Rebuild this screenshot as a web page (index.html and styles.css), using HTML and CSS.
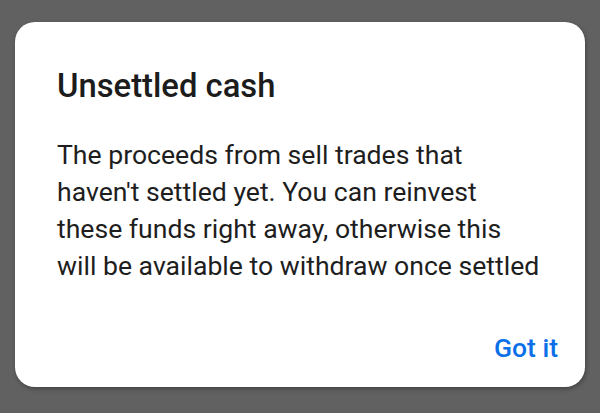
FILE: index.html
```html
<!DOCTYPE html>
<html>
<head>
<meta charset="utf-8">
<link rel="stylesheet" href="styles.css">
</head>
<body>
<div class="dialog">
  <h1 class="title">Unsettled cash</h1>
  <p class="body">The proceeds from sell trades that<br>haven't settled yet. You can reinvest<br>these funds right away, otherwise this<br>will be available to withdraw once settled</p>
  <div class="actions"><button class="btn">Got it</button></div>
</div>
</body>
</html>
```
FILE: styles.css
```css
html, body { margin: 0; padding: 0; }
body {
  width: 600px;
  height: 413px;
  background: #616161;
  font-family: Roboto, "Noto Sans", sans-serif;
  padding: 22px 15px 0 15px;
  box-sizing: border-box;
}
.dialog {
  background: #fff;
  border-radius: 20px;
  height: 365px;
  box-sizing: border-box;
  padding: 0 27px 0 42px;
  box-shadow: 1px 2px 4px rgba(0,0,0,0.3);
  display: flex;
  flex-direction: column;
}
.title {
  margin: 44px 0 0 0;
  font-size: 32.8px;
  font-weight: 500;
  line-height: 40px;
  color: #1c1c1c;
}
.body {
  margin: 30px 0 0 0;
  font-size: 26.6px;
  line-height: 37px;
  color: #1e1e1e;
  white-space: nowrap;
}
.actions {
  margin-top: auto;
  display: flex;
  justify-content: flex-end;
  padding-bottom: 24px;
}
.btn {
  border: none;
  background: none;
  padding: 0;
  font-family: Roboto, sans-serif;
  font-weight: 500;
  font-size: 26.5px;
  line-height: 30px;
  color: #0b6fe9;
}
```
